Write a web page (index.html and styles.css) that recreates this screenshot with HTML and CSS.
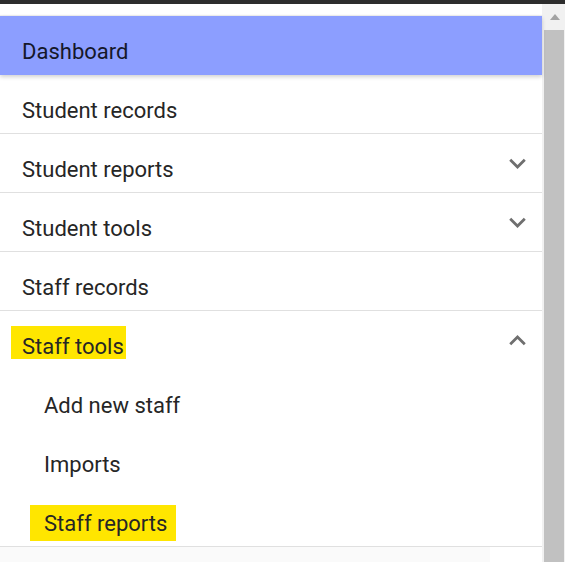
FILE: index.html
```html
<!DOCTYPE html>
<html>
<head>
<meta charset="utf-8">
<link rel="stylesheet" href="styles.css">
</head>
<body>
<div class="topbar"></div>
<div class="frame">
  <nav class="menu">
    <div class="item active">Dashboard</div>
    <div class="item">Student records</div>
    <div class="item"><span>Student reports</span>
      <svg class="chev" viewBox="0 0 24 24"><path d="M16.59 8.59L12 13.17 7.41 8.59 6 10l6 6 6-6z"/></svg>
    </div>
    <div class="item"><span>Student tools</span>
      <svg class="chev" viewBox="0 0 24 24"><path d="M16.59 8.59L12 13.17 7.41 8.59 6 10l6 6 6-6z"/></svg>
    </div>
    <div class="item">Staff records</div>
    <div class="item open"><span class="label"><span class="hl hl-a">Staff tools</span></span>
      <svg class="chev" viewBox="0 0 24 24"><path d="M12 8l-6 6 1.41 1.41L12 10.83l4.59 4.58L18 14z"/></svg>
    </div>
    <div class="item sub">Add new staff</div>
    <div class="item sub">Imports</div>
    <div class="item sub last"><span class="label"><span class="hl hl-b">Staff reports</span></span></div>
    <div class="more"></div>
  </nav>
  <div class="scrollbar">
    <div class="arrow"><span class="tri"></span></div>
    <div class="thumb"></div>
  </div>
</div>
</body>
</html>
```
FILE: styles.css
```css
html, body {
  margin: 0;
  padding: 0;
  background: #ffffff;
}
body {
  font-family: Roboto, "Liberation Sans", sans-serif;
  overflow: hidden;
}
.topbar {
  height: 4px;
  background: #2d2d2d;
}
.frame {
  display: flex;
  height: 558px;
  overflow: hidden;
}
.menu {
  width: 542px;
  flex-shrink: 0;
  padding-top: 12px;
  box-sizing: border-box;
}
.item {
  display: flex;
  justify-content: space-between;
  align-items: flex-start;
  padding: 24px 8px 10px 22px;
  font-size: 22px;
  line-height: 24px;
  color: #262626;
  border-bottom: 1px solid #e0e0e0;
}
.item.active {
  background: #8c9eff;
  color: #15182a;
  border-bottom: none;
  padding-bottom: 11px;
  position: relative;
  z-index: 1;
  box-shadow: 0 2px 4px rgba(0, 0, 0, 0.18), 0 -1px 1px rgba(0, 0, 0, 0.06);
}
.item.open {
  border-bottom: none;
  padding-bottom: 11px;
}
.item.sub {
  padding-left: 44px;
  border-bottom: none;
  padding-bottom: 11px;
}
.item.sub.last {
  border-bottom: 1px solid #e0e0e0;
  padding-bottom: 10px;
}
.label {
  display: block;
}
.chev {
  width: 33px;
  height: 33px;
  margin-top: -11px;
  flex-shrink: 0;
  fill: #6f6f6f;
}
.hl {
  background: #ffe600;
}
.hl-a {
  padding: 8px 2px 0 11px;
  margin-left: -11px;
}
.hl-b {
  padding: 6px 9px 5px 14px;
  margin-left: -14px;
}
.more {
  width: 490px;
  height: 20px;
  background: #fafafa;
}
.scrollbar {
  width: 23px;
  flex-shrink: 0;
  background: #f1f1f1;
  display: flex;
  flex-direction: column;
}
.arrow {
  height: 26px;
  display: flex;
  justify-content: center;
  padding-left: 2px;
}
.tri {
  width: 0;
  height: 0;
  margin-top: 10px;
  border-left: 5.5px solid transparent;
  border-right: 5.5px solid transparent;
  border-bottom: 6px solid #a3a3a3;
}
.thumb {
  flex: 1;
  margin: 0 1px 0 2px;
  background: #c1c1c1;
}
```
